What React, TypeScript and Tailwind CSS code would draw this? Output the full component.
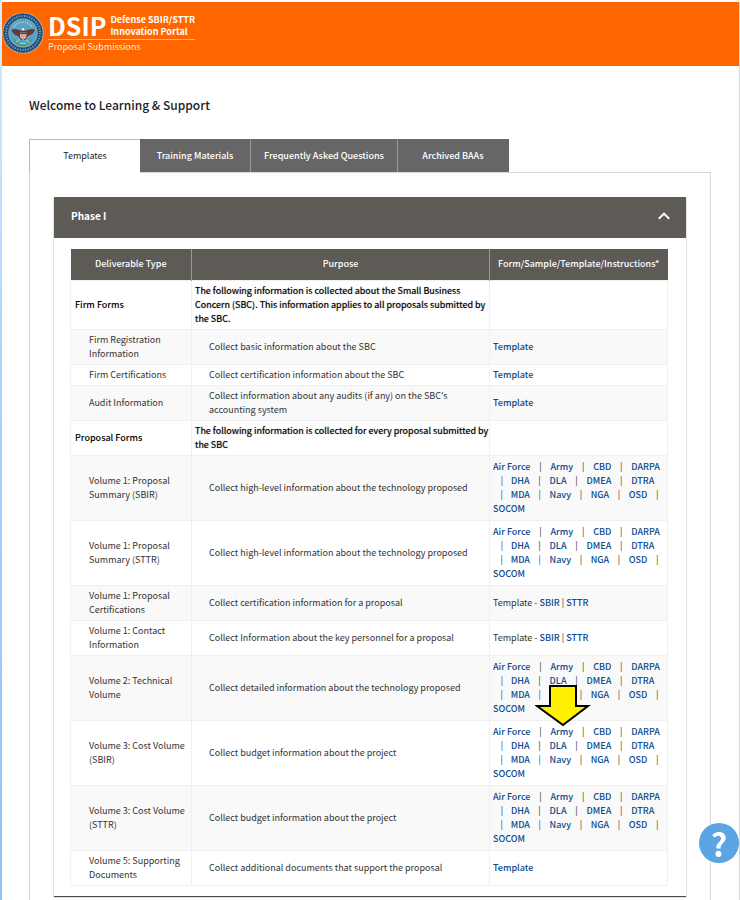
import React from "react";

const AGENCY_LINES = [
  ["Air Force", "|", "Army", "|", "CBD", "|", "DARPA"],
  ["|", "DHA", "|", "DLA", "|", "DMEA", "|", "DTRA"],
  ["|", "MDA", "|", "Navy", "|", "NGA", "|", "OSD", "|"],
  ["SOCOM"],
];

type Form = "none" | "template" | "pair" | "agencies" | "marked";
type Row = { type: string; purpose: string; form: Form; heading?: boolean };

const ROWS: Row[] = [
  {
    type: "Firm Forms",
    purpose:
      "The following information is collected about the Small Business Concern (SBC). This information applies to all proposals submitted by the SBC.",
    form: "none",
    heading: true,
  },
  { type: "Firm Registration Information", purpose: "Collect basic information about the SBC", form: "template" },
  { type: "Firm Certifications", purpose: "Collect certification information about the SBC", form: "template" },
  {
    type: "Audit Information",
    purpose: "Collect information about any audits (if any) on the SBC's accounting system",
    form: "template",
  },
  {
    type: "Proposal Forms",
    purpose: "The following information is collected for every proposal submitted by the SBC",
    form: "none",
    heading: true,
  },
  { type: "Volume 1: Proposal Summary (SBIR)", purpose: "Collect high-level information about the technology proposed", form: "agencies" },
  { type: "Volume 1: Proposal Summary (STTR)", purpose: "Collect high-level information about the technology proposed", form: "agencies" },
  { type: "Volume 1: Proposal Certifications", purpose: "Collect certification information for a proposal", form: "pair" },
  { type: "Volume 1: Contact Information", purpose: "Collect Information about the key personnel for a proposal", form: "pair" },
  { type: "Volume 2: Technical Volume", purpose: "Collect detailed information about the technology proposed", form: "agencies" },
  { type: "Volume 3: Cost Volume (SBIR)", purpose: "Collect budget information about the project", form: "marked" },
  { type: "Volume 3: Cost Volume (STTR)", purpose: "Collect budget information about the project", form: "agencies" },
  { type: "Volume 5: Supporting Documents", purpose: "Collect additional documents that support the proposal", form: "template" },
];

function Link({ children }: { children: React.ReactNode }) {
  return (
    <a href="#" className="font-medium text-[#0b4a8c]">
      {children}
    </a>
  );
}

function Agencies() {
  return (
    <div className="py-px whitespace-nowrap">
      {AGENCY_LINES.map((line, i) => (
        <div key={i} className="flex">
          {line.map((item, j) =>
            item === "|" ? (
              <span key={j} className={j === 0 ? "w-[18px] text-center" : "w-5 text-center"}>
                |
              </span>
            ) : (
              <Link key={j}>{item}</Link>
            ),
          )}
        </div>
      ))}
    </div>
  );
}

function Arrow() {
  return (
    <svg className="absolute -top-10 left-[42px] z-10 h-[44px] w-[56px]" viewBox="0 0 56 44" aria-hidden="true">
      <path d="M15 2H41V22H53L28 41L2 22H15Z" fill="#ffef00" stroke="#000" strokeWidth="2" />
    </svg>
  );
}

function FormCell({ form }: { form: Form }) {
  if (form === "template") return <Link>Template</Link>;
  if (form === "pair")
    return (
      <>
        Template - <Link>SBIR</Link> | <Link>STTR</Link>
      </>
    );
  if (form === "agencies") return <Agencies />;
  if (form === "marked")
    return (
      <div className="relative">
        <Arrow />
        <Agencies />
      </div>
    );
  return null;
}

function Seal() {
  return (
    <svg viewBox="0 0 42 42" className="size-[42px] shrink-0" role="img" aria-label="Department of Defense seal">
      <circle cx="21" cy="21" r="20.6" fill="#c9b98a" />
      <circle cx="21" cy="21" r="19.8" fill="#1f5083" />
      <circle cx="21" cy="21" r="17" fill="none" stroke="#7f9fb8" strokeWidth="2" strokeDasharray="1.1 1.5" />
      <circle cx="21" cy="21" r="14.6" fill="#a9b890" />
      <circle cx="21" cy="21" r="13.9" fill="#56a3cf" />
      <path d="M11.5 15.500a11 11 0 0 1 19 0" fill="none" stroke="#a9c58c" strokeWidth="1.8" strokeDasharray="1.4 0.8" />
      <path d="M9.500 17.500c4-1.500 7.500 0 9.500 1.500l.5-2.500 1.500-1.200 2 1.200.3 2.500c2.500-1.500 6-3 9.700-1.500-1 4-4 5.500-7 6.500l-3 4h-4l-3-4c-3-1-5.500-2.500-6.500-6.500z" fill="#6a3b28" />
      <path d="M19.500 16.800l1.500-1.300 1.700 1.300v1.700h-3z" fill="#f1ece2" />
      <path d="M18 20.500h6.200v4.500l-3.100 3-3.100-3z" fill="#eee4e2" />
      <path d="M18 20.500h6.200v1.500H18z" fill="#284d87" />
      <path d="M19.200 22v3.500M21.100 22v5M23 22v3.500" stroke="#c4443c" strokeWidth="0.8" />
      <path d="M12 27.500c2 4.500 5.500 5.800 9 5.500 4-.3 7-2 9-6" fill="none" stroke="#4c9c6a" strokeWidth="1.8" />
      <path d="M14 30l4-3M24 28l4 3M18 31.500h6" stroke="#dccb6c" strokeWidth="1" />
    </svg>
  );
}

const TABS = [
  { label: "Training Materials", width: "w-[111px]" },
  { label: "Frequently Asked Questions", width: "w-[147px]" },
  { label: "Archived BAAs", width: "w-[111px]" },
];

export default function App() {
  return (
    <div className="flex min-h-screen bg-white font-['Noto_Sans_CJK_SC','Noto_Sans',sans-serif] text-[9px] leading-[14px] text-[#333]">
      <div className="w-0.5 shrink-0 bg-linear-to-b from-[#d8ecff] via-[#a9d3fb] via-40% to-[#8fc0f5]" />
      <div className="mt-0.5 min-w-0 flex-1 border-r border-[#d5d5d5]">
        <header className="flex h-16 items-start bg-[#ff6600] pt-2.5 text-white">
          <Seal />
          <div className="ml-1">
            <div className="flex items-center border-b border-[#ffb27f]">
              <span className="text-[25px] leading-[27px] font-bold">DSIP</span>
              <span className="ml-1 leading-3 font-bold">
                Defense SBIR/STTR
                <br />
                Innovation Portal
              </span>
            </div>
            <div className="text-[#ffe8d8]">Proposal Submissions</div>
          </div>
        </header>
        <main className="pr-7 pl-[27px]">
          <h1 className="pt-7 text-[12px] leading-[22px] font-medium text-[#222]">Welcome to Learning &amp; Support</h1>
          <div className="mt-[23px] flex" role="tablist">
            <button role="tab" aria-selected="true" className="-mb-px h-[34px] w-[111px] border border-r-0 border-b-0 border-[#bbb] bg-white pb-0.5 text-[#222]">
              Templates
            </button>
            {TABS.map((tab) => (
              <button
                key={tab.label}
                role="tab"
                aria-selected="false"
                className={`h-[33px] border-r border-[#999] bg-[#666] font-medium whitespace-nowrap text-white last:border-[#666] ${tab.width}`}
              >
                {tab.label}
              </button>
            ))}
          </div>
          <div className="border border-b-0 border-[#d8d8d8] px-6 pt-6 pb-12">
            <section className="shadow-[0_1px_1px_rgba(0,0,0,0.7)]">
              <h2>
                <button aria-expanded="true" className="flex h-[41px] w-full items-center justify-between bg-[#5e5a56] pr-4 pb-1 pl-[17px] text-[10px] font-bold text-white">
                  Phase I
                  <svg className="h-2 w-3" viewBox="0 0 12 8" fill="none" stroke="currentColor" strokeWidth="2" aria-hidden="true">
                    <path d="M0.800 6.800L6 1.600L11.200 6.800" />
                  </svg>
                </button>
              </h2>
              <div className="pt-[11px] pr-[18px] pb-2.5 pl-4">
                <table className="w-full table-fixed border-collapse">
                  <colgroup>
                    <col className="w-[121px]" />
                    <col />
                    <col className="w-[178px]" />
                  </colgroup>
                  <thead>
                    <tr className="h-[31px] bg-[#5e5a56] text-white">
                      <th className="border-r border-[#999] font-medium">Deliverable Type</th>
                      <th className="border-r border-[#999] font-medium">Purpose</th>
                      <th className="font-medium whitespace-nowrap">Form/Sample/Template/Instructions*</th>
                    </tr>
                  </thead>
                  <tbody>
                    {ROWS.map((row) => (
                      <tr key={row.type} className="even:bg-[#f9f9f9]">
                        <td className={`border border-[#f0f0f0] py-[3px] ${row.heading ? "pl-1 font-medium text-black" : "pl-[18px]"}`}>{row.type}</td>
                        <td
                          className={`border border-[#f0f0f0] py-[3px] ${row.heading ? "pl-[3px] text-black [text-shadow:0_0_1px_#0008]" : "px-[17px]"}`}
                        >
                          {row.purpose}
                        </td>
                        <td className="border border-[#f0f0f0] py-[3px] pl-[3px]">
                          <FormCell form={row.form} />
                        </td>
                      </tr>
                    ))}
                  </tbody>
                </table>
              </div>
            </section>
          </div>
        </main>
      </div>
      <button aria-label="Help" className="fixed right-[1px] bottom-[37px] size-10 rounded-full bg-[#5ba5e4] text-[32px] leading-10 font-bold text-white">
        ?
      </button>
    </div>
  );
}
